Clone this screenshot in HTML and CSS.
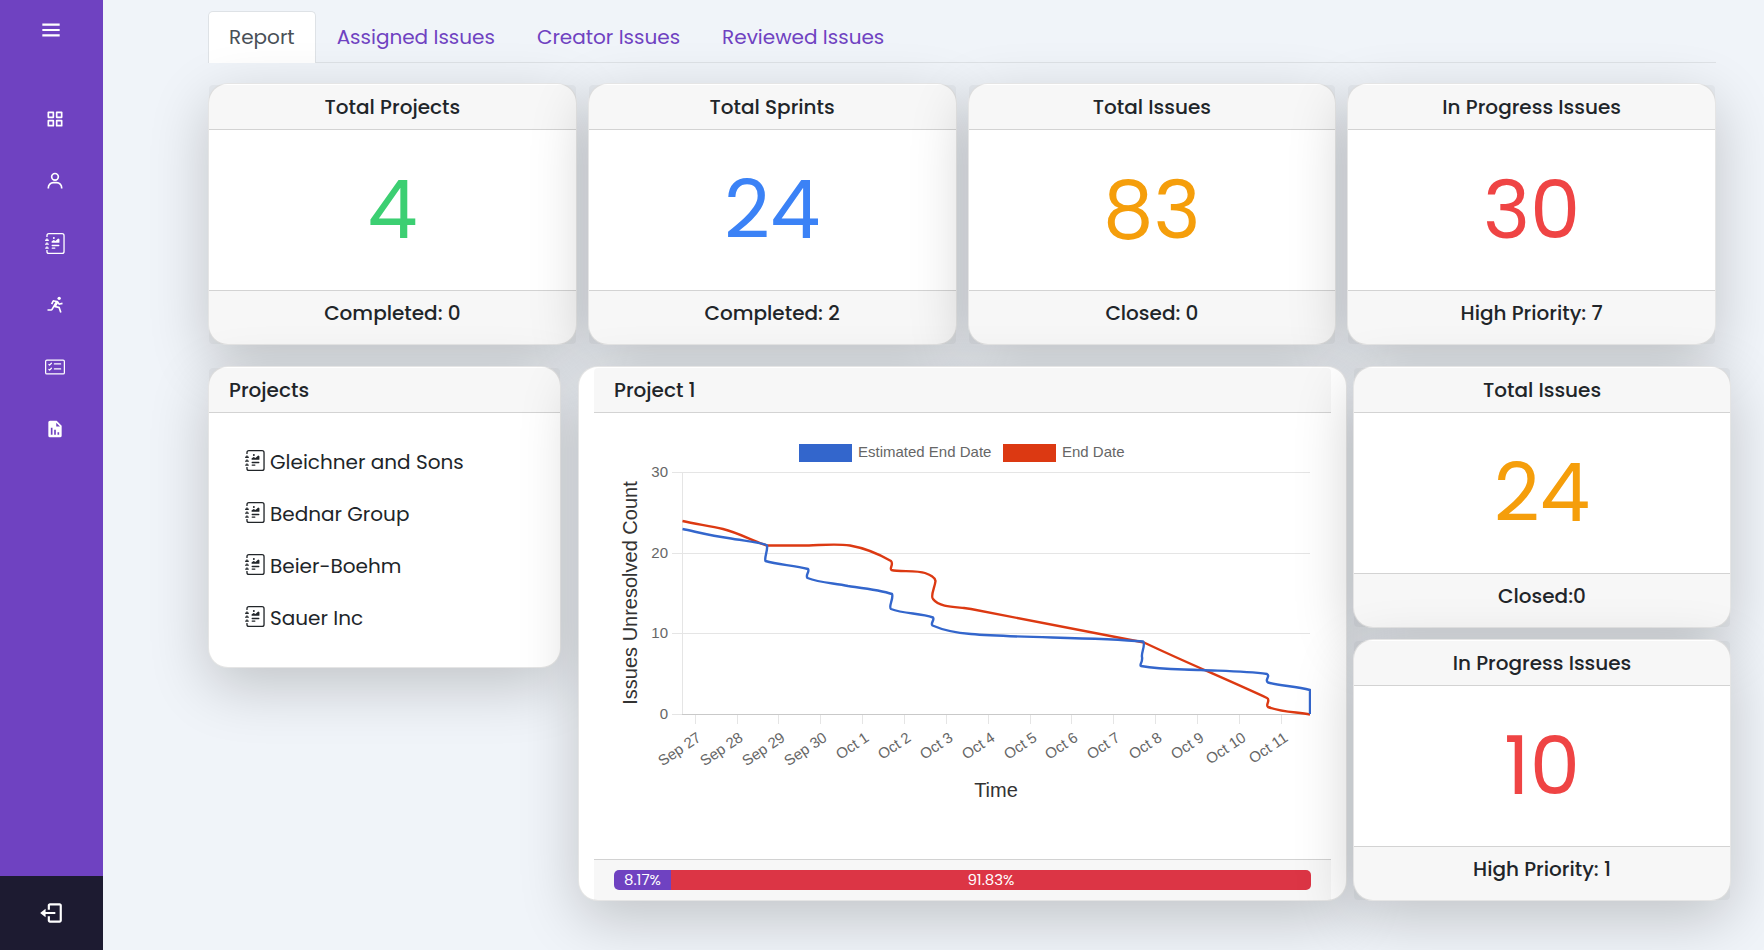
FILE: index.html
```html
<!DOCTYPE html>
<html lang="en">
<head>
<meta charset="utf-8">
<meta name="viewport" content="width=device-width, initial-scale=1">
<title>Report</title>
<link rel="stylesheet" href="styles.css">
</head>
<body>
<svg class="symbols" aria-hidden="true">
  <symbol id="journal" viewBox="0 0 16 16">
    <path d="M7.5 3.75a.75.75 0 1 1-1.5 0 .75.75 0 0 1 1.5 0zm-.861 1.542 1.33.886 1.854-1.855a.25.25 0 0 1 .289-.047L11 4.75V7a.5.5 0 0 1-.5.5h-5A.5.5 0 0 1 5 7v-.5s1.54-1.274 1.639-1.208zM5 9.5a.5.5 0 0 1 .5-.5h5a.5.5 0 0 1 0 1h-5a.5.5 0 0 1-.5-.5zm0 2a.5.5 0 0 1 .5-.5h2a.5.5 0 0 1 0 1h-2a.5.5 0 0 1-.5-.5z"/>
    <path d="M3 0h10a2 2 0 0 1 2 2v12a2 2 0 0 1-2 2H3a2 2 0 0 1-2-2v-1h1v1a1 1 0 0 0 1 1h10a1 1 0 0 0 1-1V2a1 1 0 0 0-1-1H3a1 1 0 0 0-1 1v1H1V2a2 2 0 0 1 2-2z"/>
    <path d="M1 5v-.5a.5.5 0 0 1 1 0V5h.5a.5.5 0 0 1 0 1h-2a.5.5 0 0 1 0-1H1zm0 3v-.5a.5.5 0 0 1 1 0V8h.5a.5.5 0 0 1 0 1h-2a.5.5 0 0 1 0-1H1zm0 3v-.5a.5.5 0 0 1 1 0v.5h.5a.5.5 0 0 1 0 1h-2a.5.5 0 0 1 0-1H1z"/>
  </symbol>
</svg>
<div class="app">
  <aside class="sidebar">
    <button class="menu-toggle" type="button" aria-label="Toggle menu">
      <svg class="icon-lg" viewBox="0 0 24 24"><path d="M4 6h16v2H4zm0 5h16v2H4zm0 5h16v2H4z"/></svg>
    </button>
    <nav class="side-nav">
      <a class="side-link" href="#" aria-label="Dashboard"><svg class="icon" viewBox="0 0 24 24"><path fill-rule="evenodd" d="M4 3h6a1 1 0 0 1 1 1v6a1 1 0 0 1-1 1H4a1 1 0 0 1-1-1V4a1 1 0 0 1 1-1zm1 2v4h4V5zm9-2h6a1 1 0 0 1 1 1v6a1 1 0 0 1-1 1h-6a1 1 0 0 1-1-1V4a1 1 0 0 1 1-1zm1 2v4h4V5zM4 13h6a1 1 0 0 1 1 1v6a1 1 0 0 1-1 1H4a1 1 0 0 1-1-1v-6a1 1 0 0 1 1-1zm1 2v4h4v-4zm9-2h6a1 1 0 0 1 1 1v6a1 1 0 0 1-1 1h-6a1 1 0 0 1-1-1v-6a1 1 0 0 1 1-1zm1 2v4h4v-4z"/></svg></a>
      <a class="side-link" href="#" aria-label="User"><svg class="icon" viewBox="0 0 24 24"><path d="M12 2a5 5 0 1 0 5 5 5 5 0 0 0-5-5zm0 8a3 3 0 1 1 3-3 3 3 0 0 1-3 3zm9 11v-1a7 7 0 0 0-7-7h-4a7 7 0 0 0-7 7v1h2v-1a5 5 0 0 1 5-5h4a5 5 0 0 1 5 5v1z"/></svg></a>
      <a class="side-link" href="#" aria-label="Projects"><svg class="icon icon-journal"><use href="#journal"/></svg></a>
      <a class="side-link" href="#" aria-label="Sprints"><svg class="icon" viewBox="0 0 24 24"><circle cx="17" cy="4" r="2"/><path d="M15.777 10.969a2.007 2.007 0 0 0 2.148.83l3.316-.829-.483-1.94-3.316.829-1.379-2.067a2.01 2.01 0 0 0-1.272-.854l-3.846-.77a1.998 1.998 0 0 0-2.181 1.067l-1.658 3.316 1.789.895 1.658-3.317 1.967.394L7.434 17H3v2h4.434c.698 0 1.355-.372 1.715-.971l1.918-3.196 5.169 1.034 1.816 5.449 1.896-.633-1.815-5.448a2.007 2.007 0 0 0-1.506-1.33l-3.039-.607 1.772-2.954.417.625z"/></svg></a>
      <a class="side-link" href="#" aria-label="Issues"><svg class="icon" viewBox="0 0 16 16"><path d="M14.5 3a.5.5 0 0 1 .5.5v9a.5.5 0 0 1-.5.5h-13a.5.5 0 0 1-.5-.5v-9a.5.5 0 0 1 .5-.5h13zm-13-1A1.5 1.5 0 0 0 0 3.5v9A1.5 1.5 0 0 0 1.5 14h13a1.5 1.5 0 0 0 1.5-1.5v-9A1.5 1.5 0 0 0 14.5 2h-13z"/><path d="M7 5.5a.5.5 0 0 1 .5-.5h5a.5.5 0 0 1 0 1h-5a.5.5 0 0 1-.5-.5zm-1.496-.854a.5.5 0 0 1 0 .708l-1.5 1.5a.5.5 0 0 1-.708 0l-.5-.5a.5.5 0 1 1 .708-.708l.146.147 1.146-1.147a.5.5 0 0 1 .708 0zM7 9.5a.5.5 0 0 1 .5-.5h5a.5.5 0 0 1 0 1h-5a.5.5 0 0 1-.5-.5zm-1.496-.854a.5.5 0 0 1 0 .708l-1.5 1.5a.5.5 0 0 1-.708 0l-.5-.5a.5.5 0 0 1 .708-.708l.146.147 1.146-1.147a.5.5 0 0 1 .708 0z"/></svg></a>
      <a class="side-link" href="#" aria-label="Reports"><svg class="icon" viewBox="0 0 24 24"><path fill-rule="evenodd" d="M6 2h8l6 6v12a2 2 0 0 1-2 2H6a2 2 0 0 1-2-2V4a2 2 0 0 1 2-2zm7.500 2.500V9H18zM7 10.500V19h2v-8.500zM11 13v6h2v-6zm4 3v3h2v-3z"/></svg></a>
    </nav>
    <button class="logout" type="button" aria-label="Log out">
      <svg class="icon-lg" viewBox="0 0 24 24"><path d="M16 13v-2H7V8l-5 4 5 4v-3z"/><path d="M20 3h-9c-1.103 0-2 .897-2 2v4h2V5h9v14h-9v-4H9v4c0 1.103.897 2 2 2h9c1.103 0 2-.897 2-2V5c0-1.103-.897-2-2-2z"/></svg>
    </button>
  </aside>

  <main class="content">
    <nav class="tabs">
      <a class="tab tab-active" href="#" aria-current="page">Report</a>
      <a class="tab" href="#">Assigned Issues</a>
      <a class="tab" href="#">Creator Issues</a>
      <a class="tab" href="#">Reviewed Issues</a>
    </nav>

    <section class="stats">
      <article class="card stat">
        <h5 class="card-header">Total Projects</h5>
        <div class="stat-value green">4</div>
        <div class="stat-footer">Completed: 0</div>
      </article>
      <article class="card stat">
        <h5 class="card-header">Total Sprints</h5>
        <div class="stat-value blue">24</div>
        <div class="stat-footer">Completed: 2</div>
      </article>
      <article class="card stat">
        <h5 class="card-header">Total Issues</h5>
        <div class="stat-value amber">83</div>
        <div class="stat-footer">Closed: 0</div>
      </article>
      <article class="card stat">
        <h5 class="card-header">In Progress Issues</h5>
        <div class="stat-value red">30</div>
        <div class="stat-footer">High Priority: 7</div>
      </article>
    </section>

    <section class="details">
      <article class="card projects">
        <h5 class="card-header">Projects</h5>
        <ul class="project-list">
          <li><a class="project" href="#"><svg class="icon icon-journal"><use href="#journal"/></svg>Gleichner and Sons</a></li>
          <li><a class="project" href="#"><svg class="icon icon-journal"><use href="#journal"/></svg>Bednar Group</a></li>
          <li><a class="project" href="#"><svg class="icon icon-journal"><use href="#journal"/></svg>Beier-Boehm</a></li>
          <li><a class="project" href="#"><svg class="icon icon-journal"><use href="#journal"/></svg>Sauer Inc</a></li>
        </ul>
      </article>

      <article class="card chart-card">
        <h5 class="card-header">Project 1</h5>
        <div class="chart-body">
          <svg class="chart" viewBox="0 0 697 390" role="img" aria-label="Issues unresolved over time">
            <rect x="185" y="11" width="53" height="18" fill="#3366cc"/>
            <text x="244" y="24">Estimated End Date</text>
            <rect x="389" y="11" width="53" height="18" fill="#dc3912"/>
            <text x="448" y="24">End Date</text>

            <g class="grid">
              <path d="M58 39.500H696M58 120.500H696M58 200.500H696M58 281.500H68M68.500 39V281"/>
              <path d="M81.500 282v9M123.500 282v9M164.500 282v9M206.500 282v9M248.500 282v9M290.500 282v9M332.500 282v9M374.500 282v9M416.500 282v9M457.500 282v9M499.500 282v9M541.500 282v9M583.500 282v9M625.500 282v9M667.500 282v9"/>
            </g>
            <path class="axis" d="M68 281.500H696"/>

            <g text-anchor="end">
              <text x="54" y="44">30</text>
              <text x="54" y="125">20</text>
              <text x="54" y="205">10</text>
              <text x="54" y="286">0</text>
              <text transform="translate(88 307) rotate(-34)">Sep 27</text>
              <text transform="translate(130 307) rotate(-34)">Sep 28</text>
              <text transform="translate(172 307) rotate(-34)">Sep 29</text>
              <text transform="translate(214 307) rotate(-34)">Sep 30</text>
              <text transform="translate(256 307) rotate(-34)">Oct 1</text>
              <text transform="translate(298 307) rotate(-34)">Oct 2</text>
              <text transform="translate(340 307) rotate(-34)">Oct 3</text>
              <text transform="translate(382 307) rotate(-34)">Oct 4</text>
              <text transform="translate(424 307) rotate(-34)">Oct 5</text>
              <text transform="translate(465 307) rotate(-34)">Oct 6</text>
              <text transform="translate(507 307) rotate(-34)">Oct 7</text>
              <text transform="translate(549 307) rotate(-34)">Oct 8</text>
              <text transform="translate(591 307) rotate(-34)">Oct 9</text>
              <text transform="translate(633 307) rotate(-34)">Oct 10</text>
              <text transform="translate(675 307) rotate(-34)">Oct 11</text>
            </g>
            <g class="axis-title" text-anchor="middle">
              <text transform="translate(23 160) rotate(-90)">Issues Unresolved Count</text>
              <text x="382" y="364">Time</text>
            </g>

            <path class="line" stroke="#dc3912" stroke-width="2.4" d="M68.500 88C82 91 96 93 109 96C125 100 139 108 153 112.500H195C209 112 222 110.500 236 112.500C250 115 265 121 277 128C280 131 275 136 277.500 137C285 139 303 137 311 140C316 142 321 144 321.500 148C321 154 316 163 319 166C325 174 339 174 350 175L357 176L530 209.500C571 229 612 246 653 265C657 267 651 272 654 274C668 279 682 279 696 281.500"/>
            <path class="line" stroke="#3366cc" stroke-width="2.4" d="M68.500 96C83 99 98 103 114 105C130 108 148 109 153 112.500C154 117 150 125 151.500 128C164 132 180 132 194 136C196 139 191 142 193.500 145C206 150 220 150 234 153C248 155 266 157 278 161C280 165 274 174 277 176C290 181 306 180 319 184.500C321 187 316 190 318.500 192.500C331 198 344 200 357 201C403 205 478 204 529 208.500C532 211 527 220 528 224C529 229 525 232 527 233C548 237 567 236 587 237C609 238 632 238 653 241C657 243 650 247 654 249.500C666 253 682 253 696 257V281"/>
          </svg>
        </div>
        <div class="chart-footer">
          <div class="progress">
            <div class="bar bar-done" style="width: 8.17%">8.17%</div>
            <div class="bar bar-left" style="width: 91.83%">91.83%</div>
          </div>
        </div>
      </article>

      <div class="side-stats">
        <article class="card stat">
          <h5 class="card-header">Total Issues</h5>
          <div class="stat-value amber">24</div>
          <div class="stat-footer">Closed:0</div>
        </article>
        <article class="card stat">
          <h5 class="card-header">In Progress Issues</h5>
          <div class="stat-value red">10</div>
          <div class="stat-footer">High Priority: 1</div>
        </article>
      </div>
    </section>
  </main>
</div>
</body>
</html>
```
FILE: styles.css
```css
* { box-sizing: border-box; }

body {
  margin: 0;
  background: #f0f4f9;
  color: #212529;
  font-family: Poppins, Inter, sans-serif;
  font-size: 20px;
  line-height: 30px;
}

a { text-decoration: none; color: inherit; }
h5, ul { margin: 0; padding: 0; }
.symbols { display: none; }

.app { display: flex; min-height: 100vh; }

/* Sidebar */
.sidebar {
  display: flex;
  flex-direction: column;
  flex: 0 0 103px;
  background: #6f42c1;
}
.icon { width: 20px; height: 20px; fill: currentColor; flex: none; }
.icon-journal { width: 21px; height: 21px; }
.icon-lg { width: 26px; height: 26px; fill: currentColor; }
.menu-toggle, .logout {
  display: flex;
  align-items: center;
  justify-content: center;
  border: 0;
  padding: 0 1px 0 0;
  color: #fff;
  background: none;
  cursor: pointer;
}
.menu-toggle { height: 60px; }
.side-nav { display: flex; flex-direction: column; padding: 28px 0 0 7px; flex: 1; }
.side-link {
  display: flex;
  align-items: center;
  justify-content: center;
  height: 62px;
  color: #fff;
}
.logout { height: 74px; background: #1d1b31; }

/* Content */
.content { flex: 1; min-width: 0; padding: 11px 48px 48px 105px; }

.tabs { display: flex; border-bottom: 1px solid #dee2e6; margin-bottom: 20px; }
.tab {
  padding: 10px 20px;
  border: 1px solid transparent;
  border-bottom: 0;
  border-radius: 5px 5px 0 0;
  color: #6f42c1;
}
.tab-active {
  margin-bottom: -1px;
  padding-bottom: 11px;
  color: #495057;
  background: #fff;
  border-color: #dee2e6;
}

.card {
  padding-top: 1px;
  border: 1px solid rgba(0, 0, 0, 0.1);
  border-radius: 20px;
  background: #fff;
  background-clip: border-box;
  box-shadow: 0 18px 60px rgba(0, 0, 0, 0.2);
}
.card-header {
  padding: 10px 20px;
  border-bottom: 1px solid rgba(0, 0, 0, 0.15);
  border-radius: 4px 4px 0 0;
  background: rgba(0, 0, 0, 0.03);
  font-size: 20px;
  font-weight: 500;
  line-height: 24px;
}

.stats {
  display: grid;
  grid-template-columns: repeat(4, 1fr);
  gap: 11px;
  margin-bottom: 21px;
}
.stat { text-align: center; }
.stat-value { padding: 20px; font-size: 80px; line-height: 120px; }
.stat-footer {
  padding: 10px 20px 19px;
  border-top: 1px solid rgba(0, 0, 0, 0.15);
  border-radius: 0 0 4px 4px;
  background: rgba(0, 0, 0, 0.03);
  font-weight: 500;
  line-height: 24px;
}
.green { color: #3ccf72; }
.blue { color: #3b82f6; }
.amber { color: #f59e0b; }
.red { color: #ef4444; }

.details {
  display: grid;
  grid-template-columns: minmax(0, 364fr) minmax(0, 769fr) minmax(0, 378fr);
  gap: 6px;
  margin-right: -15px;
}
.projects { align-self: start; margin-right: 11px; }
.project-list { padding: 23px 36px; list-style: none; }
.project { display: flex; align-items: center; gap: 4px; height: 52px; }
.project .icon { margin-bottom: 3px; }

.chart-card { display: flex; flex-direction: column; padding: 1px 15px 0; }
.chart-body { flex: 1; padding: 20px; }
.chart { display: block; width: 100%; height: auto; }
.chart text { font-family: "Liberation Sans", Arial, sans-serif; font-size: 15px; fill: #666; }
.chart .axis-title text { font-size: 20px; fill: #333; }
.grid path { fill: none; stroke: #e5e5e5; }
.axis { stroke: #c9c9c9; }
.line { fill: none; stroke-linejoin: round; }
.chart-footer {
  padding: 10px 20px;
  border-top: 1px solid rgba(0, 0, 0, 0.15);
  background: rgba(0, 0, 0, 0.03);
}
.progress { display: flex; height: 20px; overflow: hidden; border-radius: 5px; }
.bar { color: #fff; font-size: 15px; line-height: 20px; text-align: center; }
.bar-done { background: #6f42c1; }
.bar-left { background: #dc3545; }

.side-stats { display: flex; flex-direction: column; gap: 11px; }
```
